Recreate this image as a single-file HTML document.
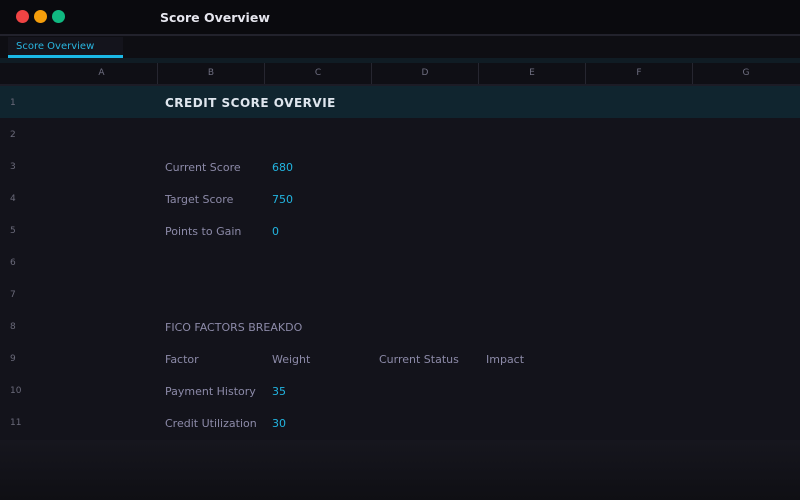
<!DOCTYPE html>
<html><head><style>
*{margin:0;padding:0;box-sizing:border-box}
body{width:800px;height:500px;overflow:hidden;background:#13131b;font-family:"DejaVu Sans","Liberation Sans",sans-serif;position:relative}
.title{height:36px;background:#0a0a0e;position:relative;border-bottom:2px solid #22222c}
.dot{position:absolute;top:10px;width:13px;height:13px;border-radius:50%}
.title .t{position:absolute;left:160px;top:10px;color:#e6e6ee;font-size:12.5px;font-weight:bold}
.tabs{height:22px;background:#0e0e13;position:relative}
.tab{position:absolute;left:8px;top:1px;width:115px;height:21px;background:#14141c;border-bottom:3px solid #1ab8e6;color:#29b6e0;font-size:10px;padding:4px 0 0 8px}
.strip{height:5px;background:#101c24}
.hdr{height:23px;background:#0f0f15;position:relative;border-bottom:2px solid #1c1c26}
.hdr div{position:absolute;top:0;height:21px;width:107px;border-left:1px solid #262630;color:#6e6e80;font-size:9px;text-align:center;line-height:21px}
.row{height:32px;position:relative;font-size:11px;color:#8c8aa8}
.row .n{position:absolute;left:10px;top:12px;font-size:9px;color:#6a6a7a}
.row span{position:absolute;top:11px}
.v{color:#22b4e0}
.fade{position:absolute;left:0;top:440px;width:800px;height:60px;background:linear-gradient(#16161e,#0f0f14);}
</style></head><body>
<div class="title">
<div class="dot" style="left:16px;background:#ef4444"></div>
<div class="dot" style="left:34px;background:#f59e0b"></div>
<div class="dot" style="left:52px;background:#10b981"></div>
<div class="t">Score Overview</div>
</div>
<div class="tabs"><div class="tab">Score Overview</div></div>
<div class="strip"></div>
<div class="hdr">
<div style="left:48px;border-left:none">A</div><div style="left:157px">B</div><div style="left:264px">C</div><div style="left:371px">D</div><div style="left:478px">E</div><div style="left:585px">F</div><div style="left:692px">G</div>
</div>
<div class="row" style="background:#10252f"><div class="n">1</div><span style="left:165px;top:10px;color:#dfe6ee;font-weight:bold;font-size:12px;letter-spacing:0.5px">CREDIT SCORE OVERVIE</span></div>
<div class="row"><div class="n">2</div></div>
<div class="row"><div class="n">3</div><span style="left:165px">Current Score</span><span class="v" style="left:272px">680</span></div>
<div class="row"><div class="n">4</div><span style="left:165px">Target Score</span><span class="v" style="left:272px">750</span></div>
<div class="row"><div class="n">5</div><span style="left:165px">Points to Gain</span><span class="v" style="left:272px">0</span></div>
<div class="row"><div class="n">6</div></div>
<div class="row"><div class="n">7</div></div>
<div class="row"><div class="n">8</div><span style="left:165px">FICO FACTORS BREAKDO</span></div>
<div class="row"><div class="n">9</div><span style="left:165px">Factor</span><span style="left:272px">Weight</span><span style="left:379px">Current Status</span><span style="left:486px">Impact</span></div>
<div class="row"><div class="n">10</div><span style="left:165px">Payment History</span><span class="v" style="left:272px">35</span></div>
<div class="row"><div class="n">11</div><span style="left:165px">Credit Utilization</span><span class="v" style="left:272px">30</span></div>
<div class="fade"></div>
</body></html>
